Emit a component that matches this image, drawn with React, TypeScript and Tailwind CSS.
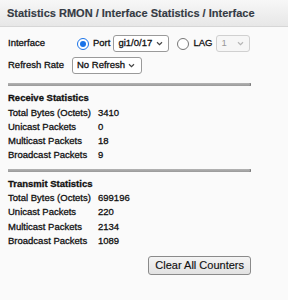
import React from "react";

const rx = [
  ["Total Bytes (Octets)", "3410"],
  ["Unicast Packets", "0"],
  ["Multicast Packets", "18"],
  ["Broadcast Packets", "9"],
];

const tx = [
  ["Total Bytes (Octets)", "699196"],
  ["Unicast Packets", "220"],
  ["Multicast Packets", "2134"],
  ["Broadcast Packets", "1089"],
];

function Chevron({ light }: { light?: boolean }) {
  return (
    <svg width="7" height="5" viewBox="0 0 7 5" className="shrink-0">
      <path d="M1 1.2 L3.5 3.6 L6 1.2" fill="none" stroke={light ? "#b5b5b5" : "#444"} strokeWidth="1.2" />
    </svg>
  );
}

function Radio({ checked }: { checked?: boolean }) {
  return (
    <span
      className={`flex h-[12px] w-[12px] items-center justify-center rounded-full border-[1.5px] ${
        checked ? "border-[#1a73e8]" : "border-[#767676]"
      } bg-white`}
    >
      {checked && <span className="h-[6px] w-[6px] rounded-full bg-[#1a73e8]" />}
    </span>
  );
}

// grey rule between sections
function Bar() {
  return <div className="h-[3px] w-[243px] rounded-r-[1px] bg-gradient-to-b from-[#b4b4b4] to-[#999] shadow-[inset_-1px_0_0_#7a7a7a]" />;
}

function StatBlock({ title, rows }: { title: string; rows: string[][] }) {
  return (
    <div className="flex flex-col">
      <div className="h-[14.5px] font-bold leading-[14.5px]">{title}</div>
      {rows.map(([k, v]) => (
        <div key={k} className="flex h-[14.3px] leading-[14.3px]">
          <span className="w-[90px]">{k}</span>
          <span>{v}</span>
        </div>
      ))}
    </div>
  );
}

export default function App() {
  return (
    <div className="h-[300px] w-[288px] bg-[#fafafa] font-['Liberation_Sans',Arial,sans-serif] text-[#111]">
      <div className="flex h-[27px] items-center border-b border-[#d6d6d6] bg-gradient-to-b from-[#f7f7f7] to-[#e7e7e7] pl-[7px]">
        <h1 className="text-[11px] font-bold text-[#353b44] [-webkit-text-stroke:0.15px_#353b44]">
          Statistics RMON / Interface Statistics / Interface
        </h1>
      </div>

      <div className="flex flex-col pl-[8px] text-[9.5px] [-webkit-text-stroke:0.3px_#111]">
        <div className="mt-[8px] flex h-[17px] items-center">
          <span className="w-[69px]">Interface</span>
          <Radio checked />
          <span className="ml-[4px]">Port</span>
          <div className="ml-[3px] flex h-[17px] w-[56px] items-center justify-between rounded-[3px] border border-[#9a9a9a] bg-white pl-[4px] pr-[5px]">
            <span>gi1/0/17</span>
            <Chevron />
          </div>
          <span className="ml-[8px]">
            <Radio />
          </span>
          <span className="ml-[4px]">LAG</span>
          <div className="ml-[4px] flex h-[17px] w-[34px] items-center justify-between rounded-[3px] border border-[#d0d0d0] bg-[#f6f6f6] pl-[4px] pr-[5px] text-[#999] [-webkit-text-stroke:0]">
            <span>1</span>
            <Chevron light />
          </div>
        </div>

        <div className="mt-[5px] flex h-[17px] items-center">
          <span className="w-[64px]">Refresh Rate</span>
          <div className="flex h-[17px] w-[70px] items-center justify-between rounded-[3px] border border-[#9a9a9a] bg-white pl-[4px] pr-[6px]">
            <span>No Refresh</span>
            <Chevron />
          </div>
        </div>

        <div className="mt-[9px]">
          <Bar />
        </div>

        <div className="mt-[5px]">
          <StatBlock title="Receive Statistics" rows={rx} />
        </div>

        <div className="mt-[6px]">
          <Bar />
        </div>

        <div className="mt-[5px]">
          <StatBlock title="Transmit Statistics" rows={tx} />
        </div>

        <div className="mt-[8px] flex w-[243px] justify-end">
          <button className="h-[19px] rounded-[3px] border border-[#8a8a8a] bg-gradient-to-b from-[#f4f4f4] to-[#e2e2e2] px-[6px] text-[11px] leading-none text-[#111] [-webkit-text-stroke:0.15px_#111]">
            Clear All Counters
          </button>
        </div>
      </div>
    </div>
  );
}
